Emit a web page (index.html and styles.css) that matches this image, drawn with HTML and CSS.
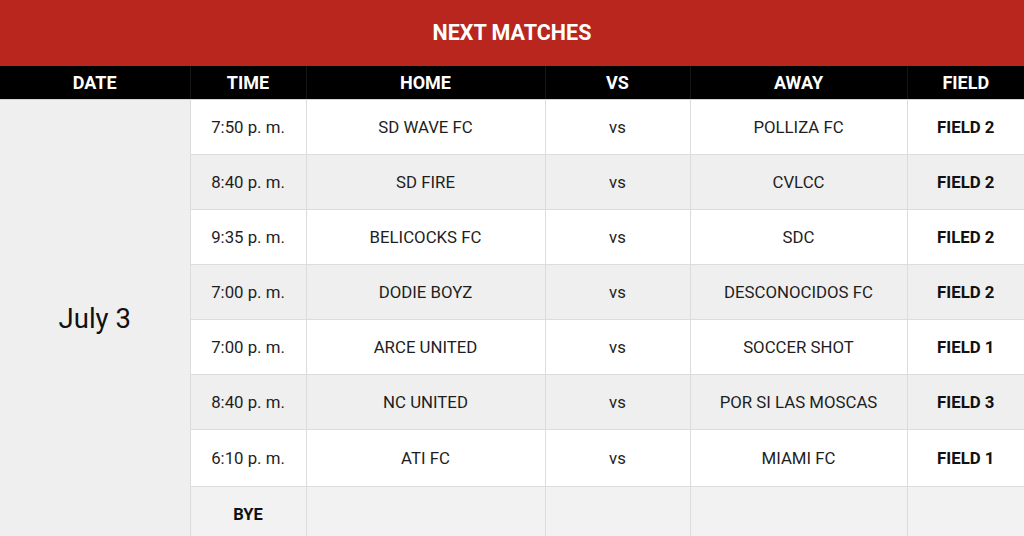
FILE: index.html
```html
<!DOCTYPE html>
<html>
<head>
<meta charset="utf-8">
<link rel="stylesheet" href="styles.css">
</head>
<body>
<div class="title">NEXT MATCHES</div>
<table class="matches">
  <colgroup>
    <col class="c-date"><col class="c-time"><col class="c-home"><col class="c-vs"><col class="c-away"><col class="c-field">
  </colgroup>
  <thead>
    <tr><th>DATE</th><th>TIME</th><th>HOME</th><th>VS</th><th>AWAY</th><th>FIELD</th></tr>
  </thead>
  <tbody>
    <tr class="odd"><td class="date" rowspan="8">July 3</td><td>7:50 p. m.</td><td>SD WAVE FC</td><td>vs</td><td>POLLIZA FC</td><td class="field">FIELD 2</td></tr>
    <tr class="even"><td>8:40 p. m.</td><td>SD FIRE</td><td>vs</td><td>CVLCC</td><td class="field">FIELD 2</td></tr>
    <tr class="odd"><td>9:35 p. m.</td><td>BELICOCKS FC</td><td>vs</td><td>SDC</td><td class="field">FILED 2</td></tr>
    <tr class="even"><td>7:00 p. m.</td><td>DODIE BOYZ</td><td>vs</td><td>DESCONOCIDOS FC</td><td class="field">FIELD 2</td></tr>
    <tr class="odd"><td>7:00 p. m.</td><td>ARCE UNITED</td><td>vs</td><td>SOCCER SHOT</td><td class="field">FIELD 1</td></tr>
    <tr class="even"><td>8:40 p. m.</td><td>NC UNITED</td><td>vs</td><td>POR SI LAS MOSCAS</td><td class="field">FIELD 3</td></tr>
    <tr class="odd tall"><td>6:10 p. m.</td><td>ATI FC</td><td>vs</td><td>MIAMI FC</td><td class="field">FIELD 1</td></tr>
    <tr class="bye"><td class="field small">BYE</td><td></td><td></td><td></td><td></td></tr>
  </tbody>
</table>
</body>
</html>
```

FILE: styles.css
```css
html, body {
  margin: 0;
  padding: 0;
  overflow: hidden;
  background: #ffffff;
  font-family: Roboto, "Liberation Sans", sans-serif;
}
.title {
  height: 66px;
  background: #b9261d;
  color: #ffffff;
  font-weight: 700;
  font-size: 21.5px;
  display: flex;
  align-items: center;
  justify-content: center;
  padding-bottom: 1px;
  box-sizing: border-box;
}
.matches {
  width: 1024px;
  border-collapse: collapse;
  table-layout: fixed;
}
.c-date { width: 190px; }
.c-time { width: 116px; }
.c-home { width: 239px; }
.c-vs { width: 145px; }
.c-away { width: 217px; }
.c-field { width: 117px; }
.matches th {
  background: #000000;
  color: #ffffff;
  font-weight: 700;
  font-size: 18px;
  height: 33px;
  padding: 0;
  border-left: 1px solid #161616;
  border-bottom: 1px solid #d4d4d4;
  text-align: center;
  vertical-align: middle;
}
.matches th:first-child { border-left: none; }
.matches td {
  height: 54px;
  padding: 0;
  text-align: center;
  vertical-align: middle;
  font-size: 16.8px;
  color: #1e1e1e;
  border: 1px solid #dcdcdc;
}
.matches tr.tall td { height: 56px; }
.matches tr.odd td { background: #ffffff; }
.matches tr.even td { background: #efefef; }
.matches tr.bye td { background: #f2f2f2; }
.matches td.date {
  background: #efefef !important;
  font-size: 27.5px;
  color: #111111;
  border-left: none;
  padding-bottom: 4px;
}
.matches td.field {
  font-weight: 700;
  color: #111111;
}
.matches td.small { font-size: 16.5px; }
.matches tr td:last-child { border-right: none; }
```
